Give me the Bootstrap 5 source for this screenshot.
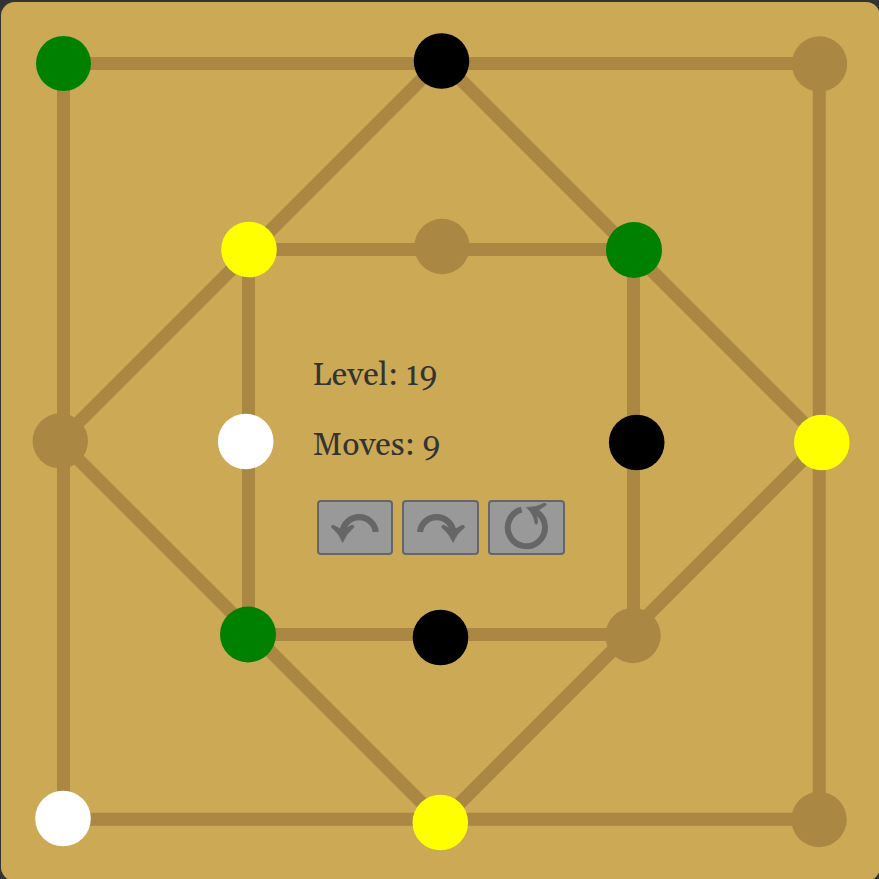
<!DOCTYPE html>
<html lang="en">
<head>
<meta charset="utf-8">
<meta name="viewport" content="width=device-width, initial-scale=1">
<title>Board puzzle</title>
<link href="https://cdn.jsdelivr.net/npm/bootstrap@5.3.0/dist/css/bootstrap.min.css" rel="stylesheet">
<style>
  body { background: #333; color: #333; font-family: Georgia, Gelasio, "Liberation Serif", serif; }
  .page { padding: 2px 0 0 1px; }
  .board { width: 100vw; aspect-ratio: 1; background: #cba955; border-radius: 14px; }
  .board > * { grid-area: 1 / 1; }
  .track { fill: none; stroke: #aa8742; stroke-width: 13px; }
  .hole { fill: #aa8742; }
  .panel { width: 256px; padding-top: 24px; }
  .stat { font-size: 32px; line-height: 48px; margin-bottom: 22px; }
  .tools { gap: 9px; padding: 8px 4px 0; }
  .tool { width: 77px; height: 55px; background: #999; border: 2px solid #666; border-radius: 4px; color: #666; }
  .tool:hover { background: #a3a3a3; border-color: #666; color: #666; }
</style>
<script src="https://cdn.jsdelivr.net/npm/bootstrap@5.3.0/dist/js/bootstrap.bundle.min.js"></script>
</head>
<body>
<main class="page vh-100 overflow-hidden">
  <div class="board d-grid">
    <svg class="w-100 h-100" viewBox="1 2 879 879" role="img" aria-label="Game board">
      <g class="track">
        <path d="M63.5 63.5H819.2V819.2H63.5Z"/>
        <path d="M441 60L822 441L441 822L60 441Z"/>
        <path d="M248.5 249.5H633.5V634.5H248.5Z"/>
      </g>
      <g class="hole">
        <circle cx="819.5" cy="64" r="27.7"/>
        <circle cx="442" cy="246.5" r="27.7"/>
        <circle cx="60.3" cy="441" r="27.7"/>
        <circle cx="633" cy="635.5" r="27.7"/>
        <circle cx="819" cy="819.5" r="27.7"/>
      </g>
      <g fill="green">
        <circle cx="63.5" cy="63.5" r="27.5"/>
        <circle cx="634" cy="250" r="28"/>
        <circle cx="248" cy="634.5" r="28"/>
      </g>
      <g fill="black">
        <circle cx="441.5" cy="61" r="27.8"/>
        <circle cx="636.7" cy="442.5" r="27.8"/>
        <circle cx="440.5" cy="637.5" r="27.8"/>
      </g>
      <g fill="yellow">
        <circle cx="249" cy="249.5" r="27.8"/>
        <circle cx="821.8" cy="442.5" r="27.8"/>
        <circle cx="440.3" cy="822.5" r="27.8"/>
      </g>
      <g fill="white">
        <circle cx="245.7" cy="441.5" r="27.8"/>
        <circle cx="63" cy="818.5" r="27.8"/>
      </g>
    </svg>
    <section class="panel align-self-center mx-auto">
      <p class="stat">Level: 19</p>
      <p class="stat">Moves: 9</p>
      <div class="tools d-flex">
        <button type="button" class="tool btn p-0 d-flex" aria-label="Undo">
          <svg class="w-100 h-100" viewBox="319 502 73 51" aria-hidden="true">
            <path d="M342.6 532A16.8 16.8 0 0 1 376 532" fill="none" stroke="currentColor" stroke-width="6.2"/>
            <path d="M342.7 542.5Q340 534 331.8 527.5Q331.2 525 333.5 525.3L339.4 528.5H345.6L352 525.2Q354.5 525 354 527.4Q346 534 342.7 542.5Z" fill="currentColor" stroke="currentColor" stroke-width=".8"/>
          </svg>
        </button>
        <button type="button" class="tool btn p-0 d-flex" aria-label="Redo">
          <svg class="w-100 h-100" viewBox="404 502 73 51" aria-hidden="true">
            <path d="M420.1 532A16.8 16.8 0 0 1 453.5 532" fill="none" stroke="currentColor" stroke-width="6.2"/>
            <path d="M453.3 542.5Q450 534 442 527.4Q441.5 525 444 525.2L450.4 528.5H456.6L462.5 525.3Q464.8 525 464.7 527.5Q456.2 534 453.3 542.5Z" fill="currentColor" stroke="currentColor" stroke-width=".8"/>
          </svg>
        </button>
        <button type="button" class="tool btn p-0 d-flex" aria-label="Restart">
          <svg class="w-100 h-100" viewBox="490 502 73 51" aria-hidden="true">
            <path d="M521.7 509.5A18.7 18.7 0 1 0 537.2 512.2" fill="none" stroke="currentColor" stroke-width="6"/>
            <path d="M526.6 507.4Q536.5 507.6 544.5 503.2Q546.8 502.8 546.3 505L539.5 509.5L536.5 515Q537.8 519 537.8 523Q536.8 525 535.3 523.5Q534 513.4 526.6 507.4Z" fill="currentColor" stroke="currentColor" stroke-width=".8"/>
          </svg>
        </button>
      </div>
    </section>
  </div>
</main>
</body>
</html>
